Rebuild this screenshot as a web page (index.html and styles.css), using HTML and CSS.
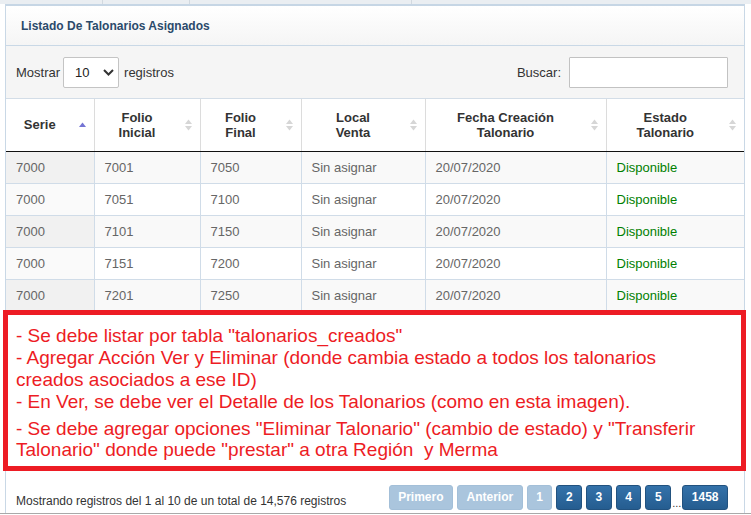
FILE: index.html
```html
<!DOCTYPE html>
<html lang="es">
<head>
<meta charset="utf-8">
<title>Listado De Talonarios Asignados</title>
<link rel="stylesheet" href="styles.css">
</head>
<body>
<div class="page">
  <div class="topbar">
    <span class="tab tab-a"></span>
    <span class="tab tab-b"></span>
    <span class="tab tab-c"></span>
    <span class="tab tab-d"></span>
  </div>
  <div class="panel">
    <div class="panel-head">Listado De Talonarios Asignados</div>
    <div class="controls">
      <div class="length">
        <span>Mostrar</span>
        <div class="select"><span>10</span>
          <svg width="11" height="7" viewBox="0 0 11 7"><path d="M1 1 L5.5 5.5 L10 1" fill="none" stroke="#333" stroke-width="2"/></svg>
        </div>
        <span>registros</span>
      </div>
      <div class="search">
        <span>Buscar:</span>
        <input type="text" class="search-input">
      </div>
    </div>
    <table class="grid">
      <colgroup>
        <col class="c1"><col class="c2"><col class="c3"><col class="c4"><col class="c5"><col class="c6">
      </colgroup>
      <thead>
        <tr>
          <th><div class="th-in"><span class="lbl">Serie</span><svg class="sort" width="7" height="12" viewBox="0 0 7 12"><polygon points="0,8 3.5,3.5 7,8" fill="#7474d4"/></svg></div></th>
          <th><div class="th-in"><span class="lbl">Folio<br>Inicial</span><svg class="sort" width="7" height="12" viewBox="0 0 7 12"><polygon points="0,5 3.5,0.5 7,5" fill="#d6d6d6"/><polygon points="0,7 7,7 3.5,11.5" fill="#d6d6d6"/></svg></div></th>
          <th><div class="th-in"><span class="lbl">Folio<br>Final</span><svg class="sort" width="7" height="12" viewBox="0 0 7 12"><polygon points="0,5 3.5,0.5 7,5" fill="#d6d6d6"/><polygon points="0,7 7,7 3.5,11.5" fill="#d6d6d6"/></svg></div></th>
          <th><div class="th-in"><span class="lbl">Local<br>Venta</span><svg class="sort" width="7" height="12" viewBox="0 0 7 12"><polygon points="0,5 3.5,0.5 7,5" fill="#d6d6d6"/><polygon points="0,7 7,7 3.5,11.5" fill="#d6d6d6"/></svg></div></th>
          <th><div class="th-in"><span class="lbl">Fecha Creación<br>Talonario</span><svg class="sort" width="7" height="12" viewBox="0 0 7 12"><polygon points="0,5 3.5,0.5 7,5" fill="#d6d6d6"/><polygon points="0,7 7,7 3.5,11.5" fill="#d6d6d6"/></svg></div></th>
          <th><div class="th-in"><span class="lbl">Estado<br>Talonario</span><svg class="sort" width="7" height="12" viewBox="0 0 7 12"><polygon points="0,5 3.5,0.5 7,5" fill="#d6d6d6"/><polygon points="0,7 7,7 3.5,11.5" fill="#d6d6d6"/></svg></div></th>
        </tr>
      </thead>
      <tbody>
        <tr><td class="sorted">7000</td><td>7001</td><td>7050</td><td>Sin asignar</td><td>20/07/2020</td><td class="ok">Disponible</td></tr>
        <tr><td class="sorted">7000</td><td>7051</td><td>7100</td><td>Sin asignar</td><td>20/07/2020</td><td class="ok">Disponible</td></tr>
        <tr><td class="sorted">7000</td><td>7101</td><td>7150</td><td>Sin asignar</td><td>20/07/2020</td><td class="ok">Disponible</td></tr>
        <tr><td class="sorted">7000</td><td>7151</td><td>7200</td><td>Sin asignar</td><td>20/07/2020</td><td class="ok">Disponible</td></tr>
        <tr><td class="sorted">7000</td><td>7201</td><td>7250</td><td>Sin asignar</td><td>20/07/2020</td><td class="ok">Disponible</td></tr>
      </tbody>
    </table>
    <div class="note">
      <p>- Se debe listar por tabla "talonarios_creados"<br>- Agregar Acción Ver y Eliminar (donde cambia estado a todos los talonarios<br>creados asociados a ese ID)<br>- En Ver, se debe ver el Detalle de los Talonarios (como en esta imagen).</p>
      <p class="gap">- Se debe agregar opciones "Eliminar Talonario" (cambio de estado) y "Transferir<br>Talonario" donde puede "prestar" a otra Región&nbsp; y Merma</p>
    </div>
    <div class="footer">
      <div class="info">Mostrando registros del 1 al 10 de un total de 14,576 registros</div>
      <div class="pager">
        <span class="pbtn off">Primero</span>
        <span class="pbtn off">Anterior</span>
        <span class="pbtn off">1</span>
        <span class="pbtn on">2</span>
        <span class="pbtn on">3</span>
        <span class="pbtn on">4</span>
        <span class="pbtn on">5</span>
        <span class="dots">...</span>
        <span class="pbtn on">1458</span>
      </div>
    </div>
  </div>
  <div class="bottomline"></div>
</div>
</body>
</html>
```

FILE: styles.css
```css
* { box-sizing: border-box; }

body {
  margin: 0;
  width: 751px;
  height: 515px;
  overflow: hidden;
  background: #fff;
  font-family: "Liberation Sans", Arial, sans-serif;
  color: #333;
}

.page {
  width: 751px;
}

.topbar {
  display: flex;
  height: 4px;
  background: #eaeef2;
}
.tab { height: 4px; border-right: 1px solid #d2d9e0; }
.tab-a { width: 103px; }
.tab-b { width: 87px; }
.tab-c { width: 222px; }
.tab-d { flex: 1; border-right: 0; }

.panel {
  margin-left: 5px;
  width: 740px;
  border-left: 1px solid #c9d8e6;
  border-right: 1px solid #c9d8e6;
  border-top: 2px solid #c6d6e5;
}

.panel-head {
  height: 40px;
  padding-left: 15px;
  display: flex;
  align-items: center;
  font-size: 12px;
  font-weight: bold;
  color: #2b4a6b;
  background: linear-gradient(#ffffff, #f5f5f5);
  border-bottom: 1px solid #c9d8e6;
}

.controls {
  height: 53px;
  padding: 0 16px 0 10px;
  display: flex;
  align-items: center;
  justify-content: space-between;
  background: #f5f5f5;
  border-bottom: 1px solid #d3dde7;
  font-size: 13px;
  color: #333;
}

.length, .search {
  display: flex;
  align-items: center;
}

.select {
  width: 56px;
  height: 31px;
  margin: 0 5px 0 3px;
  padding: 0 4px 0 11px;
  display: flex;
  align-items: center;
  justify-content: space-between;
  background: #fff;
  border: 1px solid #c4c4c4;
  border-radius: 2px;
  font-size: 13px;
  color: #222;
}

.search span { margin-right: 8px; }

.search-input {
  width: 159px;
  height: 31px;
  border: 1px solid #c2c2c2;
  border-radius: 1px;
  background: #fff;
  margin: 0;
  padding: 0;
}

.grid {
  width: 100%;
  table-layout: fixed;
  border-collapse: collapse;
}
.c1 { width: 88px; }
.c2 { width: 106px; }
.c3 { width: 101px; }
.c4 { width: 124px; }
.c5 { width: 181px; }
.c6 { width: 138px; }

.grid th {
  height: 52px;
  padding: 0 8px 0 10px;
  background: #fff;
  border-left: 1px solid #dcdcdc;
  border-bottom: 1px solid #111;
  font-size: 13px;
  font-weight: bold;
  color: #333;
  line-height: 15px;
}
.grid th:first-child { border-left: 0; }

.th-in {
  display: flex;
  align-items: center;
}
.lbl {
  flex: 1;
  text-align: center;
  margin-right: 15px;
}
.sort { flex: none; }

.grid td {
  height: 32px;
  padding: 0 10px;
  font-size: 13px;
  color: #666;
  border-left: 1px solid #d0dce8;
  border-bottom: 1px solid #d0dce8;
  white-space: nowrap;
  overflow: hidden;
}
.grid td:first-child { border-left: 0; }

.grid tbody tr:nth-child(odd) td { background: #f9f9f9; }
.grid tbody tr:nth-child(odd) td.sorted { background: #f1f1f1; }
.grid tbody tr:nth-child(even) td.sorted { background: #fafafa; }

.grid td.ok { color: #008000; }

.note {
  position: relative;
  margin: -2px -3px 0 -3px;
  width: 743px;
  height: 161px;
  border: 5px solid #ed1c24;
  background: #fff;
  padding: 10px 8px 0 8px;
  font-size: 19px;
  line-height: 22px;
  color: #ed1c24;
  white-space: nowrap;
}
.note p { margin: 0; }
.note p.gap { margin-top: 5px; line-height: 21px; }

.footer {
  height: 42px;
  padding: 11px 16px 0 10px;
  display: flex;
  align-items: center;
  justify-content: space-between;
  background: #fff;
}

.info {
  margin-top: 7px;
  font-size: 12px;
  color: #333;
}

.pager {
  display: flex;
  align-items: center;
  gap: 4px;
}

.pbtn {
  height: 25px;
  padding: 0 8.5px;
  display: flex;
  align-items: center;
  font-size: 12px;
  font-weight: bold;
  color: #fff;
  border-radius: 3px;
}
.pbtn.off {
  background: #aac5dd;
  border: 1px solid #a3bfd8;
}
.pbtn.on {
  background: linear-gradient(#3472aa, #255d90);
  border: 1px solid #22527f;
}

.dots {
  align-self: flex-end;
  margin: 0 -3px;
  font-size: 11px;
  color: #333;
  line-height: 14px;
}

.bottomline {
  height: 2px;
  border-top: 1px solid #a9a9a9;
}
```
